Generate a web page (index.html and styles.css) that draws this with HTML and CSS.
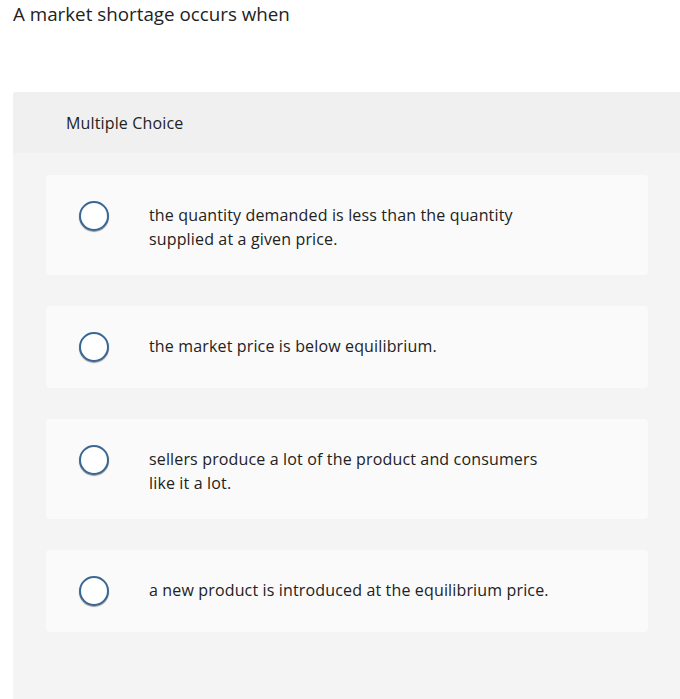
FILE: index.html
```html
<!DOCTYPE html>
<html>
<head>
<meta charset="utf-8">
<link rel="stylesheet" href="styles.css">
</head>
<body>
<div class="page">
  <p class="question">A market shortage occurs when</p>
  <section class="panel">
    <div class="panel-head">Multiple Choice</div>
    <div class="panel-body">
      <label class="choice">
        <span class="radio"></span>
        <span class="choice-text">the quantity demanded is less than the quantity supplied at a given price.</span>
      </label>
      <label class="choice">
        <span class="radio"></span>
        <span class="choice-text">the market price is below equilibrium.</span>
      </label>
      <label class="choice">
        <span class="radio"></span>
        <span class="choice-text">sellers produce a lot of the product and consumers like it a lot.</span>
      </label>
      <label class="choice">
        <span class="radio"></span>
        <span class="choice-text">a new product is introduced at the equilibrium price.</span>
      </label>
    </div>
  </section>
</div>
</body>
</html>
```
FILE: styles.css
```css
html, body {
  margin: 0;
  padding: 0;
  background: #ffffff;
}
body {
  font-family: "Open Sans", "Liberation Sans", sans-serif;
  color: #222222;
}
.page {
  padding: 0 0 0 13px;
}
.question {
  margin: 0;
  padding-top: 2px;
  font-size: 18.8px;
  line-height: 24px;
  height: 90px;
}
.panel {
  background: #f4f4f4;
  border-top-left-radius: 3px;
  min-height: 607px;
}
.panel-head {
  background: #f0f0f0;
  height: 61px;
  display: flex;
  align-items: center;
  padding-left: 53px;
  font-size: 16px;
  letter-spacing: 0.15px;
  border-top-left-radius: 3px;
}
.panel-body {
  padding: 22px 32px 40px 33px;
  display: flex;
  flex-direction: column;
  gap: 31px;
}
.choice {
  background: #fafafa;
  border-radius: 4px;
  display: flex;
  align-items: flex-start;
  padding: 26px 32px 26px 33px;
  font-size: 16px;
  letter-spacing: 0.15px;
  line-height: 24px;
}
.radio {
  flex: none;
  width: 26px;
  height: 26px;
  border: 2px solid #3a6894;
  border-radius: 50%;
  background: #ffffff;
  box-shadow: 0 1px 1px rgba(0,0,0,0.4);
  margin-right: 40px;
}
.choice-text {
  max-width: 400px;
  padding-top: 2px;
  margin-bottom: -2px;
}
```
